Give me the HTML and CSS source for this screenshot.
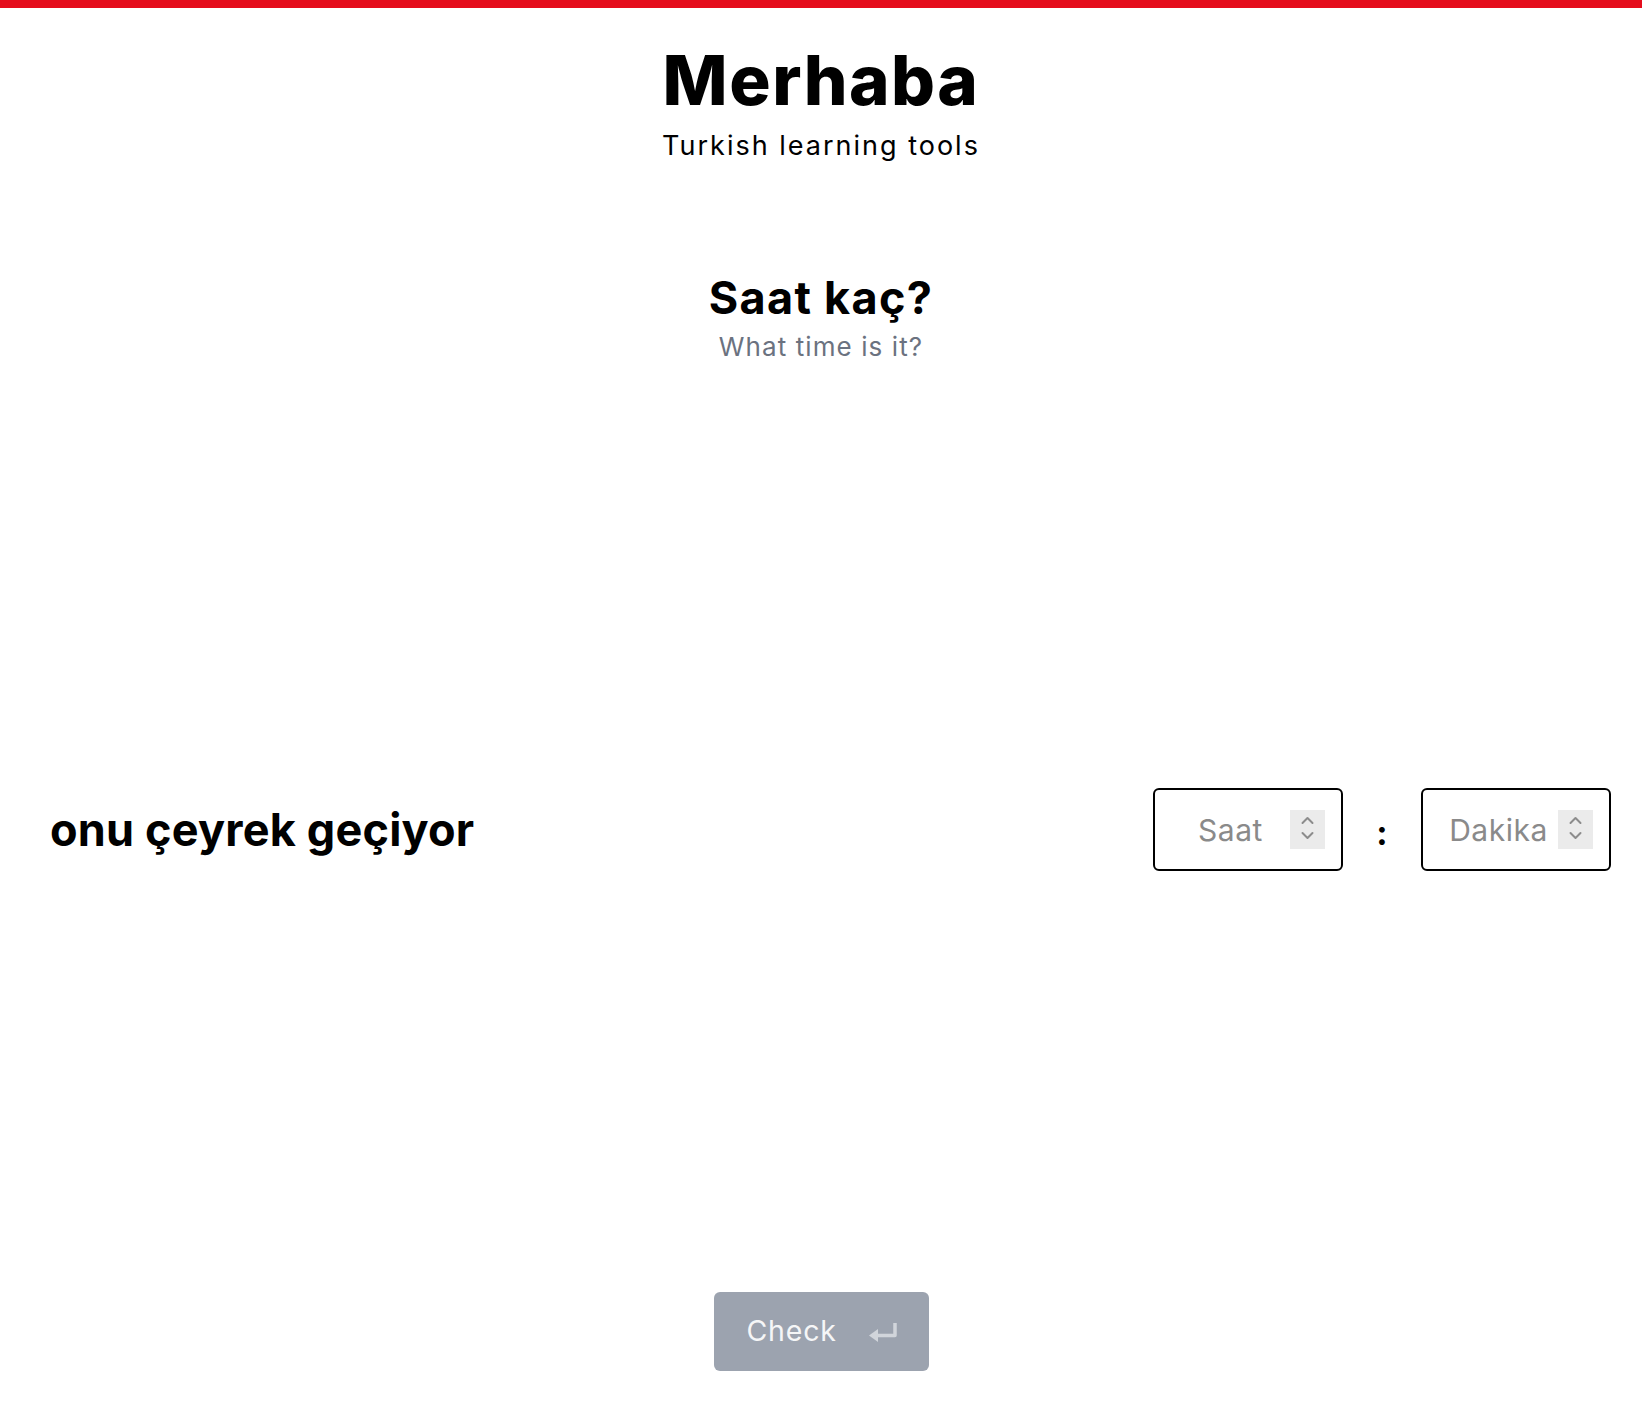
FILE: index.html
```html
<!DOCTYPE html>
<html lang="tr">
<head>
<meta charset="utf-8">
<title>Merhaba – Saat kaç?</title>
<link rel="stylesheet" href="styles.css">
</head>
<body>
<div class="topbar"></div>
<header class="site-header">
  <h1 class="brand">Merhaba</h1>
  <p class="tagline">Turkish learning tools</p>
</header>
<main class="quiz">
  <h2 class="quiz-title">Saat kaç?</h2>
  <p class="quiz-subtitle">What time is it?</p>
  <div class="question-row">
    <div class="phrase">onu çeyrek geçiyor</div>
    <div class="time-inputs">
      <label class="num-field">
        <input class="num-input" type="text" placeholder="Saat">
        <span class="spinner"><svg width="35" height="39" viewBox="0 0 35 39"><path d="M12.5 13 L17.5 8 L22.5 13 M12.5 23 L17.5 28 L22.5 23" fill="none" stroke="#8c8c8c" stroke-width="2" stroke-linecap="round" stroke-linejoin="round"/></svg></span>
      </label>
      <span class="colon">:</span>
      <label class="num-field">
        <input class="num-input" type="text" placeholder="Dakika">
        <span class="spinner"><svg width="35" height="39" viewBox="0 0 35 39"><path d="M12.5 13 L17.5 8 L22.5 13 M12.5 23 L17.5 28 L22.5 23" fill="none" stroke="#8c8c8c" stroke-width="2" stroke-linecap="round" stroke-linejoin="round"/></svg></span>
      </label>
    </div>
  </div>
  <div class="actions">
    <button class="check-btn" type="button">
      <span class="check-label">Check</span>
      <svg class="enter-icon" width="30" height="20" viewBox="0 0 30 20"><path d="M27 1 V13.5 H8" fill="none" stroke="#d1d5db" stroke-width="3.5" stroke-linejoin="round"/><polygon points="1,13.5 10,7 10,20" fill="#d1d5db"/></svg>
    </button>
  </div>
</main>
</body>
</html>
```
FILE: styles.css
```css
html, body {
  margin: 0;
  padding: 0;
  background: #ffffff;
}
body {
  font-family: Inter, "Noto Sans", "Liberation Sans", sans-serif;
  color: #000000;
}
.topbar {
  height: 8px;
  background: #e50d1c;
}
.site-header {
  text-align: center;
  padding-top: 38px;
}
.brand {
  margin: 0;
  font-size: 69px;
  line-height: 1;
  font-weight: 800;
  letter-spacing: 1.5px;
}
.tagline {
  margin: 17px 0 0;
  font-size: 27px;
  line-height: 1;
  font-weight: 400;
  letter-spacing: 2px;
}
.quiz {
  display: flex;
  flex-direction: column;
  align-items: stretch;
}
.quiz-title {
  margin: 116px 0 0;
  text-align: center;
  font-size: 45px;
  line-height: 1;
  font-weight: 700;
  letter-spacing: 1.3px;
}
.quiz-subtitle {
  margin: 14px 0 0;
  text-align: center;
  font-size: 26px;
  line-height: 1;
  font-weight: 400;
  color: #6b7280;
  letter-spacing: 1.1px;
}
.question-row {
  margin-top: 428px;
  display: flex;
  align-items: center;
  justify-content: space-between;
  padding: 0 31px 0 50px;
}
.phrase {
  font-size: 45px;
  line-height: 1;
  font-weight: 700;
  letter-spacing: 0.2px;
}
.time-inputs {
  display: flex;
  align-items: center;
}
.num-field {
  box-sizing: border-box;
  width: 190px;
  height: 83px;
  border: 2px solid #000000;
  border-radius: 6px;
  padding: 0 16px;
  display: flex;
  align-items: center;
}
.num-input {
  flex: 1;
  min-width: 0;
  border: 0;
  outline: none;
  background: transparent;
  padding: 0;
  font-family: Inter, "Noto Sans", "Liberation Sans", sans-serif;
  font-size: 30px;
  text-align: center;
  color: #000000;
  letter-spacing: 0.5px;
}
.num-input::placeholder {
  color: #8a8a8a;
}
.spinner {
  flex: none;
  width: 35px;
  height: 39px;
  background: #ebebeb;
  display: flex;
}
.colon {
  width: 78px;
  text-align: center;
  font-size: 34px;
  font-weight: 700;
  line-height: 1;
  padding-top: 6px;
}
.actions {
  margin-top: 421px;
  display: flex;
  justify-content: center;
}
.check-btn {
  box-sizing: border-box;
  width: 215px;
  height: 79px;
  border: 0;
  border-radius: 6px;
  background: #9ca3af;
  display: flex;
  align-items: center;
  justify-content: space-between;
  padding: 0 31px 0 33px;
  font-family: Inter, "Noto Sans", "Liberation Sans", sans-serif;
}
.check-label {
  font-size: 28.5px;
  line-height: 1;
  color: #f5f6f7;
  letter-spacing: 0.8px;
}
.enter-icon {
  display: block;
}
```
